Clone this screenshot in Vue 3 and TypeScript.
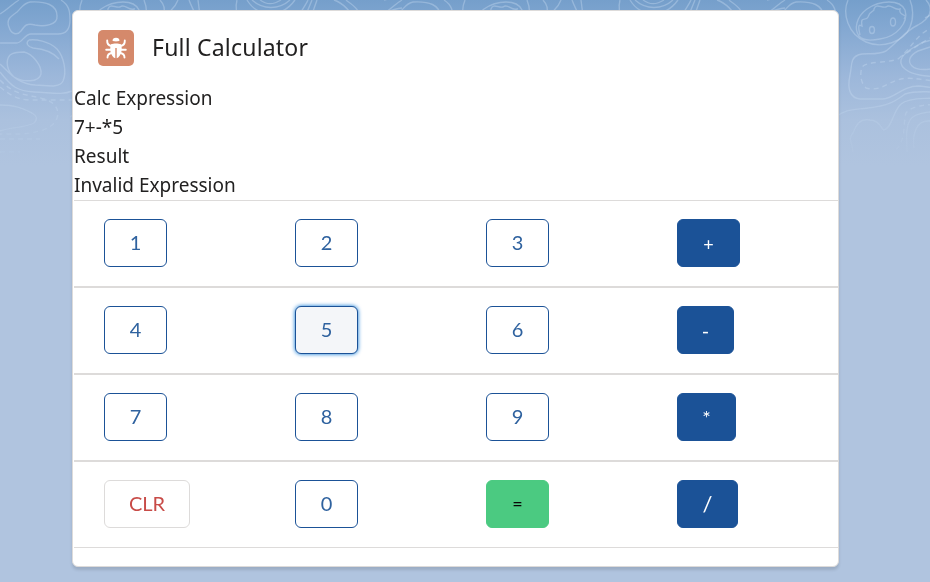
<script setup lang="ts">
import { ref } from 'vue'

interface CalcKey {
  label: string
  kind: 'number' | 'brand' | 'success' | 'danger'
  size?: 'plus' | 'minus' | 'times' | 'divide'
}

const expression = ref('7+-*5')
const result = ref('Invalid Expression')
const active = ref('5')
const tiles = [0, 383, 766]

const rows: CalcKey[][] = [
  [
    { label: '1', kind: 'number' },
    { label: '2', kind: 'number' },
    { label: '3', kind: 'number' },
    { label: '+', kind: 'brand', size: 'plus' },
  ],
  [
    { label: '4', kind: 'number' },
    { label: '5', kind: 'number' },
    { label: '6', kind: 'number' },
    { label: '-', kind: 'brand', size: 'minus' },
  ],
  [
    { label: '7', kind: 'number' },
    { label: '8', kind: 'number' },
    { label: '9', kind: 'number' },
    { label: '*', kind: 'brand', size: 'times' },
  ],
  [
    { label: 'CLR', kind: 'danger' },
    { label: '0', kind: 'number' },
    { label: '=', kind: 'success' },
    { label: '/', kind: 'brand', size: 'divide' },
  ],
]

function press(key: string): void {
  active.value = key
  if (key === 'CLR') {
    expression.value = ''
    result.value = ''
  } else if (key === '=') {
    result.value = evaluate(expression.value)
  } else {
    expression.value += key
  }
}

function evaluate(source: string): string {
  if (!/^\d+([+\-*/]\d+)*$/.test(source)) return 'Invalid Expression'
  const tokens = source.match(/\d+|[+\-*/]/g) ?? []
  const terms: number[] = [Number(tokens[0])]
  for (let i = 1; i < tokens.length; i += 2) {
    const value = Number(tokens[i + 1])
    const last = terms.length - 1
    if (tokens[i] === '+') terms.push(value)
    else if (tokens[i] === '-') terms.push(-value)
    else if (tokens[i] === '*') terms[last] *= value
    else terms[last] /= value
  }
  return String(terms.reduce((sum, term) => sum + term, 0))
}
</script>

<template>
  <div class="page">
    <svg class="topography" width="930" height="170" viewBox="0 0 930 170" aria-hidden="true">
      <defs>
        <linearGradient id="fade" x1="0" y1="0" x2="0" y2="1">
          <stop offset="0" stop-color="#fff" />
          <stop offset=".55" stop-color="#fff" />
          <stop offset="1" stop-color="#000" />
        </linearGradient>
        <mask id="fade-mask">
          <rect width="930" height="170" fill="url(#fade)" />
        </mask>
      </defs>
      <g mask="url(#fade-mask)">
        <g v-for="x in tiles" :key="x" :transform="`translate(${x} 0)`">
          <path d="M0 14C7 10 12 4 19 0M30 2c-6 1-8 5-13 10-7 5-11 8-8 15 2 7 8 9 12 4 4-6 6-8 14-6 9 2 23 0 22-9 0-11-11-15-27-14M61 0c8 5 9 11 9 20 0 11-5 14-12 14H31c-7 0-9 10-15 9H0" />
          <path d="M29 40c6-1 20 1 28 9 7 8 10 23 6 32-4 8-18 4-28 4C17 84 9 72 0 64M29 40c-4 3-1 7 4 8 12 1 20 4 26 11M10 55c-5 6-3 16 4 22 8 5 25 6 27-3 1-8-8-20-17-22-6 0-10 0-14 3M0 72c12 15 17 19 34 20 20 1 29 3 38-1M0 105c15 0 22 3 32 8 5 3 6 6 2 10-9 5-23 4-34 8" />
          <path class="dash" d="M0 80c17 18 32 14 47 20 10 4 14 13 8 22-7 9-20 10-31 12H0M0 87c10 8 16 12 29 13h43M0 139h40M0 152h20" />
        </g>
        <g v-for="x in tiles" :key="`r${x}`" :transform="`translate(${x - 766} 0)`">
          <path d="M848 0c-6 14 0 34 18 42 16 7 38 0 44-15 4-9 3-20 0-27M859 36c-5-7-3-19 8-27 13-9 33-10 38 1 4 13-9 27-25 29-10 2-17 2-21-3M860 35c-3-12 0-10 2-9-2-11 4-4 6-9 2-7 7-5 6-8 2-6 7-1 12-2 5-4 8 4 14 2-2 8 9 4 4 10" />
          <ellipse cx="872" cy="30" rx="2.5" ry="3.5" /><ellipse cx="893" cy="22" rx="2.5" ry="4" />
          <path d="M926 0c9 10 3 19-8 25-13 6-20 17-32 26-10 5-21 1-28 4-8 3-6 12-8 20-3 14 0 23 10 24h23c12-1 19-13 36-13 16 1 25 7 41 2M960 37c-19 2-31 1-44 9-12 7-21 15-11 23 11 9 30 7 55 9M918 51c-8 4-11 10-6 15 6 6 22 3 29 1M930 47l-12 4M836 117c10-8 16-7 32-9 20-2 28-7 37-14 12-4 30-2 50 0M960 101c-22-4-51-4-59 3-8 7-9 24-17 26-3-1-4-10-14-10-10-2-14 5-17 13-6 6 0 11 0 19M907 152c0-13-2-23 3-32 5-8 22-9 50-10M914 148c-2-15 3-27 14-27h32" />
          <path class="dash" d="M960 18c-15 1-24 6-37 15-8 6-12 15-25 26-9 4-31 2-36 8-2 6-2 15 4 21 14 4 22-6 35-9 14-3 34 5 59 2M960 30c-23-1-43 17-58 26M960 106c-26-3-47-2-54 7-4 12 2 28-13 39" />
          <path d="M955 0c3 8 6 12 7 17M964 0l2 16M1003 0c-2 8-1 13 3 17M1013 0c11 18 35 18 48 0M1018 0c11 10 27 10 38 0M1026 0c7 5 13 5 21 0M1065 17c2-7 7-12 9-17M1071 17l7-17M1077 17l6-17M1100 0c9 3 17 12 20 18M1112 0c6 5 15 9 12 18M944 0c-3 8-10 14-19 18M1138 17c10-1 17-8 30-9M1150 0l16-4" />
        </g>
      </g>
    </svg>

    <article class="card">
      <header class="card-header">
        <span class="bug-icon">
          <svg width="24" height="26" viewBox="0 0 24 26" aria-hidden="true">
            <path d="M8.500 5.800C8.500 4 9.800 2.800 12 2.800s3.500 1.200 3.500 3C14 6.600 10 6.600 8.500 5.800Z" fill="#fff" />
            <path d="M7 9.200C9.500 8.200 14.500 8.200 17 9.200 18.800 14 17.300 21.500 12.700 23.300V13h-1.400v10.300C6.700 21.500 5.200 14 7 9.200Z" fill="#fff" />
            <path d="M3.200 5.500c-.2 3.500 1.300 5 4.300 5.500M20.800 5.500c.2 3.500-1.300 5-4.300 5.500M2.200 14.800H7M21.800 14.800H17M3.500 22.500c0-3 1.500-4 4-4.500M20.500 22.500c0-3-1.500-4-4-4.500" fill="none" stroke="#fff" stroke-width="1.900" stroke-linecap="round" />
          </svg>
        </span>
        <h1><span>Full Calculator</span></h1>
      </header>

      <section class="readout">
        <p class="caption">Calc Expression</p>
        <p class="expression">{{ expression }}</p>
        <p class="result-label">Result</p>
        <p class="message">{{ result }}</p>
      </section>

      <div class="keypad">
        <div v-for="(row, index) in rows" :key="index" class="key-row">
          <div v-for="key in row" :key="key.label" class="cell">
            <button
              type="button"
              :class="['key', key.kind, key.size, { active: active === key.label }]"
              @click="press(key.label)"
            >
              {{ key.label }}
            </button>
          </div>
        </div>
      </div>
    </article>
  </div>
</template>

<style>
body {
  background: #b0c4df;
}
</style>

<style scoped>
.page {
  position: relative;
  box-sizing: border-box;
  width: 930px;
  height: 582px;
  padding: 10px 91px 15px 72px;
  overflow: hidden;
  background: linear-gradient(#759fcb 0, #82a7d1 25px, #9cb7da 75px, #abc1de 120px, #b0c4df 165px);
  font-family: "Noto Sans", "Open Sans", sans-serif;
  font-weight: 400;
  color: #222121;
}

.topography {
  position: absolute;
  inset: 0 auto auto 0;
  fill: none;
  stroke: #c5d9ef;
  stroke-opacity: 0.4;
  stroke-width: 1.4;
}

.dash {
  stroke-dasharray: 5 4;
  stroke-opacity: 0.4;
}

.card {
  position: relative;
  box-sizing: border-box;
  width: 767px;
  height: 557px;
  border: 1px solid #dddbda;
  border-radius: 6px;
  background: #fff;
  box-shadow: 0 3px 3px rgba(0, 0, 0, 0.12);
}

.card-header {
  display: flex;
  align-items: center;
  gap: 18px;
  height: 36px;
  padding: 19px 25px 0;
}

.bug-icon {
  display: flex;
  align-items: center;
  justify-content: center;
  width: 36px;
  height: 36px;
  border-radius: 5px;
  background: #d5896b;
}

h1 {
  margin: 0;
  font-size: 23px;
  font-weight: 400;
  line-height: 34px;
  padding-bottom: 2px;
  letter-spacing: 0.2px;
}

.readout {
  padding: 18px 0 0 1px;
}

.readout p {
  height: 29px;
  margin: 0;
  font-size: 19px;
  line-height: 29px;
  white-space: nowrap;
}

.keypad {
  width: 764px;
  margin-left: 1px;
}

.key-row {
  display: grid;
  grid-template-columns: repeat(4, 191px);
  box-sizing: border-box;
  height: 87px;
  border-top: 1px solid #dddbda;
  border-bottom: 1px solid #dddbda;
}

.cell {
  padding: 18px 0 19px 30px;
}

.key {
  display: block;
  box-sizing: border-box;
  width: 63px;
  height: 48px;
  margin: 0;
  padding: 0 0 2px;
  border: 1px solid #1b5297;
  border-radius: 6px;
  background: #fff;
  color: #2f629f;
  font-family: Lato, "Open Sans", sans-serif;
  font-size: 20px;
  font-weight: 400;
  line-height: 44px;
  text-align: center;
}

.active {
  background: #f4f6f9;
  box-shadow: 0 0 4px #0070d2;
  outline: none;
}

.brand {
  padding: 0;
  background: #1b5297;
  color: #fff;
  line-height: 46px;
}

.plus {
  font-size: 18px;
  line-height: 48px;
}

.minus {
  width: 57px;
  line-height: 44px;
}

.times {
  width: 59px;
  line-height: 42px;
}

.divide {
  width: 61px;
  font-size: 22px;
}

.success {
  border-color: #4bca81;
  background: #4bca81;
  color: #080707;
  font-size: 18px;
}

.danger {
  width: 86px;
  border-color: #dddbda;
  color: #c84b47;
}
</style>
